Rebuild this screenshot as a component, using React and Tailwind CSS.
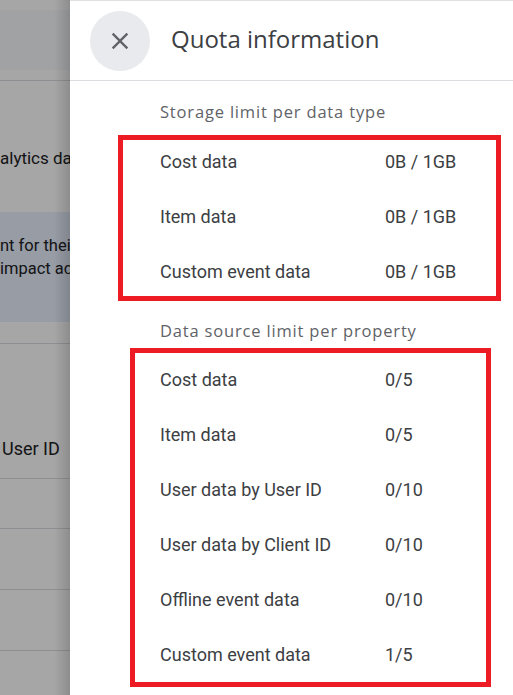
import React from "react";

const storage = [
  { label: "Cost data", value: "0B / 1GB" },
  { label: "Item data", value: "0B / 1GB" },
  { label: "Custom event data", value: "0B / 1GB" },
];

const sources = [
  { label: "Cost data", value: "0/5" },
  { label: "Item data", value: "0/5" },
  { label: "User data by User ID", value: "0/10" },
  { label: "User data by Client ID", value: "0/10" },
  { label: "Offline event data", value: "0/10" },
  { label: "Custom event data", value: "1/5" },
];

const CloseIcon = () => (
  <svg width="28" height="28" viewBox="0 0 24 24" fill="#5f6368">
    <path d="M19 6.41L17.59 5 12 10.59 6.41 5 5 6.41 10.59 12 5 17.59 6.41 19 12 13.41 17.59 19 19 17.59 13.41 12z" />
  </svg>
);

const QuotaRow = ({ row }) => (
  <div className="flex h-[42px] items-center text-[18px] text-[#3c4043]">
    <span className="w-[225px] shrink-0">{row.label}</span>
    <span>{row.value}</span>
  </div>
);

// the dimmed page behind the drawer
const BackPage = () => (
  <div className="relative w-[70px] shrink-0 overflow-hidden">
    <div className="flex w-[500px] flex-col bg-white text-[16.5px] text-[#202124]">
      <div className="h-[10px]" />
      <div className="h-[60px] bg-[#f8f9fb]" />
      <div className="h-[10px]" />
      <div className="h-[56px] border-t border-[#dadce0]" />
      <div className="flex h-[45px] items-center whitespace-nowrap text-[17px]">
        alytics data
      </div>
      <div className="h-[31px]" />
      <div className="flex h-[110px] flex-col justify-center bg-[#e8f0fe] pb-[20px] leading-[23px] whitespace-nowrap">
        <span>nt for their</span>
        <span>impact ad</span>
      </div>
      <div className="h-[21px]" />
      <div className="flex h-[135px] items-end border-t border-[#dadce0] pb-[16px] pl-[2px] text-[18px]">
        User ID
      </div>
      <div className="h-[50px] border-t border-[#dadce0]" />
      <div className="h-[61px] border-t border-[#dadce0]" />
      <div className="h-[61px] border-t border-[#dadce0]" />
      <div className="h-[60px] border-t border-[#dadce0]" />
    </div>
    <div className="absolute inset-0 bg-black/35" />
    <div className="absolute inset-y-0 right-0 w-[16px] bg-gradient-to-r from-transparent to-black/15" />
  </div>
);

const headingFont = { fontFamily: "'Open Sans', Roboto, sans-serif" };

export default function App() {
  return (
    <div
      className="flex h-[695px] w-[513px] overflow-hidden bg-white"
      style={{ fontFamily: "Roboto, 'Liberation Sans', sans-serif" }}
    >
      <BackPage />
      <div className="flex flex-1 flex-col border-t border-[#e0e0e0] bg-white">
        <div className="flex h-[80px] shrink-0 items-center border-b border-[#dadce0] pl-[20px]">
          <button className="flex h-[60px] w-[60px] items-center justify-center rounded-full bg-[#e8eaed]">
            <CloseIcon />
          </button>
          <h1
            className="mb-[3px] ml-[21px] text-[24px] text-[#3c4043]"
            style={headingFont}
          >
            Quota information
          </h1>
        </div>

        <h2
          className="mt-[21px] pl-[90px] text-[16.5px] leading-[20px] font-medium tracking-[0.05em] text-[#5f6368]"
          style={headingFont}
        >
          Storage limit per data type
        </h2>
        <div className="mt-[13px] ml-[48px] flex w-[383px] flex-col gap-[13px] border-[5px] border-[#ed1c24] pb-[4px] pl-[37px]">
          {storage.map((row) => (
            <QuotaRow key={row.label} row={row} />
          ))}
        </div>

        <h2
          className="mt-[20px] pl-[90px] text-[16.5px] leading-[20px] font-medium tracking-[0.05em] text-[#5f6368]"
          style={headingFont}
        >
          Data source limit per property
        </h2>
        <div className="mt-[7px] ml-[60px] flex w-[361px] flex-col gap-[13px] border-[5px] border-[#ed1c24] pt-[5px] pb-[7px] pl-[25px]">
          {sources.map((row) => (
            <QuotaRow key={row.label} row={row} />
          ))}
        </div>
      </div>
    </div>
  );
}
